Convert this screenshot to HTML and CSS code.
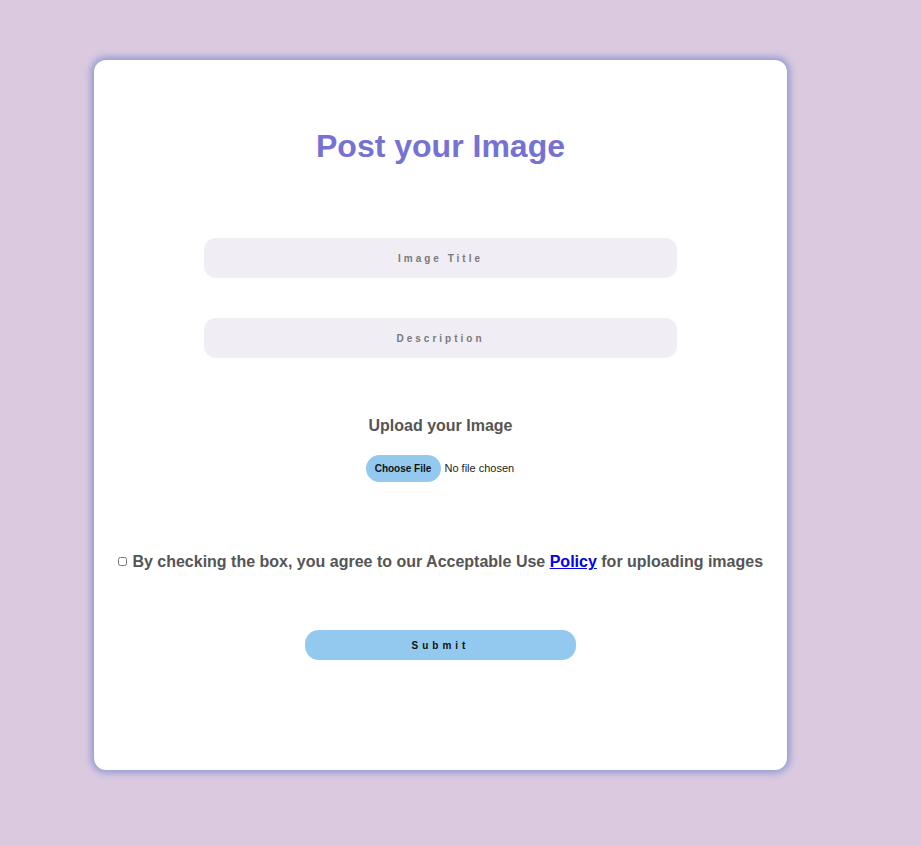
FILE: index.html
```html
<!DOCTYPE html>
<html lang="en">
<head>
<meta charset="utf-8">
<title>Post your Image</title>
<link rel="stylesheet" href="styles.css">
</head>
<body>
<div class="page">
  <form class="card">
    <h1 class="title">Post your Image</h1>
    <input class="field field-first" type="text" placeholder="Image Title">
    <input class="field" type="text" placeholder="Description">
    <h3 class="upload-label">Upload your Image</h3>
    <input class="file" type="file">
    <p class="agree"><input class="check" type="checkbox"> By checking the box, you agree to our Acceptable Use <a href="#">Policy</a> for uploading images</p>
    <button class="submit" type="button">Submit</button>
  </form>
</div>
</body>
</html>
```
FILE: styles.css
```css
html, body {
  margin: 0;
  padding: 0;
  background: #dbc9df;
  font-family: "Liberation Sans", Arial, sans-serif;
}
.page {
  padding: 60px 0 76px 94px;
}
.card {
  width: 693px;
  height: 710px;
  box-sizing: border-box;
  background: #fff;
  border-radius: 12px;
  box-shadow: 0 0 7px 3px #8f9bd4;
  display: flex;
  flex-direction: column;
  align-items: center;
  padding-top: 68px;
}
.title {
  margin: 0;
  font-size: 32px;
  line-height: 37px;
  font-weight: bold;
  color: #7672d4;
}
.field {
  width: 473px;
  height: 40px;
  box-sizing: border-box;
  border: none;
  border-radius: 12px;
  background: #f0edf4;
  text-align: center;
  font-family: "Liberation Sans", Arial, sans-serif;
  font-size: 10px;
  font-weight: bold;
  letter-spacing: 3px;
  margin-top: 40px;
  outline: none;
}
.field-first {
  margin-top: 73px;
}
.field::placeholder {
  color: #7a7a7a;
}
.upload-label {
  margin: 58px 0 0;
  font-size: 16px;
  line-height: 19px;
  font-weight: bold;
  color: #555;
}
.file {
  margin-top: 20px;
  font-family: "Liberation Sans", Arial, sans-serif;
  font-size: 11px;
  color: #222;
  width: 150px;
  padding-left: 0;
}
.file::file-selector-button {
  background: #93c9ef;
  border: none;
  border-radius: 14px;
  height: 27px;
  width: 75px;
  font-family: "Liberation Sans", Arial, sans-serif;
  font-size: 10px;
  font-weight: bold;
  color: #111;
  margin-right: 4px;
  cursor: pointer;
}
.agree {
  margin: 70px 0 0;
  font-size: 16px;
  line-height: 19px;
  font-weight: bold;
  color: #555;
  white-space: nowrap;
}
.check {
  margin: 0 1px 0 0;
  width: 9px;
  height: 9px;
  vertical-align: 1px;
}
.agree a {
  color: #0000ee;
}
.submit {
  margin-top: 59px;
  width: 271px;
  height: 30px;
  border: none;
  border-radius: 14px;
  background: #93c9ef;
  font-family: "Liberation Sans", Arial, sans-serif;
  font-size: 10px;
  font-weight: bold;
  letter-spacing: 4px;
  color: #111;
}
```
